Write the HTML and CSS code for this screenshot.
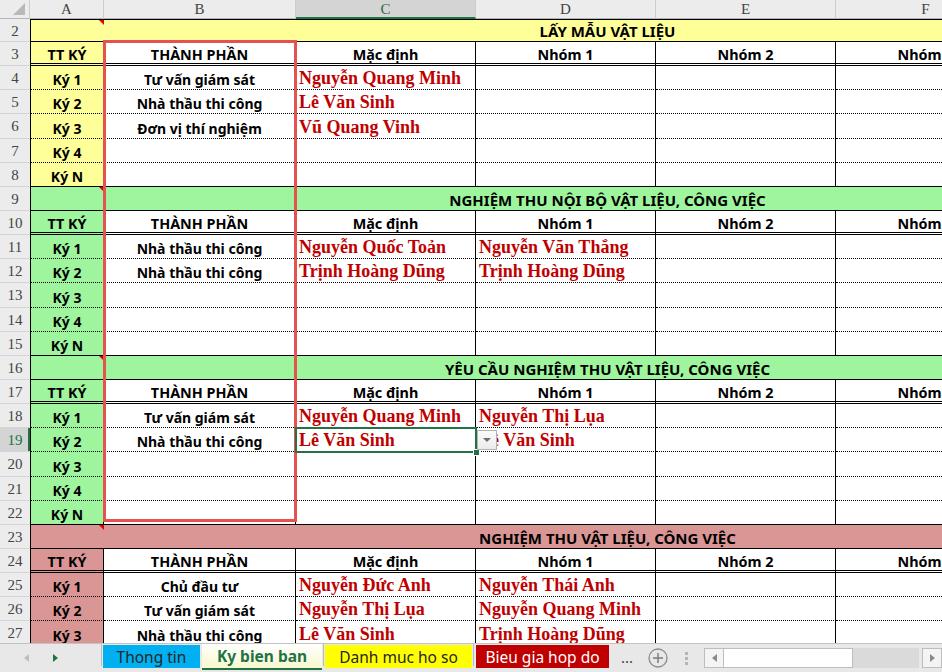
FILE: index.html
```html
<!DOCTYPE html>
<html lang="vi">
<head>
<meta charset="utf-8">
<title>Ky bien ban</title>
<link rel="stylesheet" href="styles.css">
</head>
<body>
<div class="app">
  <div class="sheet-wrap">
    <div class="sheet">
      <div class="ch corner"><span class="corner-tri"></span></div>
      <div class="ch">A</div>
      <div class="ch">B</div>
      <div class="ch sel">C</div>
      <div class="ch">D</div>
      <div class="ch">E</div>
      <div class="ch">F</div>

      <div class="row title first yel"><div class="rh">2</div><div class="t"><span class="cm"></span>LẤY MẪU VẬT LIỆU</div></div>
      <div class="row hd yel"><div class="rh">3</div><div class="a">TT KÝ</div><div>THÀNH PHẦN</div><div>Mặc định</div><div>Nhóm 1</div><div>Nhóm 2</div><div>Nhóm 3</div></div>
      <div class="row dr yel"><div class="rh">4</div><div class="a">Ký 1</div><div>Tư vấn giám sát</div><div class="nm">Nguyễn Quang Minh</div><div></div><div></div><div></div></div>
      <div class="row dr yel"><div class="rh">5</div><div class="a">Ký 2</div><div>Nhà thầu thi công</div><div class="nm">Lê Văn Sinh</div><div></div><div></div><div></div></div>
      <div class="row dr yel"><div class="rh">6</div><div class="a">Ký 3</div><div>Đơn vị thí nghiệm</div><div class="nm">Vũ Quang Vinh</div><div></div><div></div><div></div></div>
      <div class="row dr yel"><div class="rh">7</div><div class="a">Ký 4</div><div></div><div></div><div></div><div></div><div></div></div>
      <div class="row last yel"><div class="rh">8</div><div class="a">Ký N</div><div></div><div></div><div></div><div></div><div></div></div>

      <div class="row title grn"><div class="rh">9</div><div class="t"><span class="cm"></span>NGHIỆM THU NỘI BỘ VẬT LIỆU, CÔNG VIỆC</div></div>
      <div class="row hd grn"><div class="rh">10</div><div class="a">TT KÝ</div><div>THÀNH PHẦN</div><div>Mặc định</div><div>Nhóm 1</div><div>Nhóm 2</div><div>Nhóm 3</div></div>
      <div class="row dr grn"><div class="rh">11</div><div class="a">Ký 1</div><div>Nhà thầu thi công</div><div class="nm">Nguyễn Quốc Toản</div><div class="nm">Nguyễn Văn Thắng</div><div></div><div></div></div>
      <div class="row dr grn"><div class="rh">12</div><div class="a">Ký 2</div><div>Nhà thầu thi công</div><div class="nm">Trịnh Hoàng Dũng</div><div class="nm">Trịnh Hoàng Dũng</div><div></div><div></div></div>
      <div class="row dr grn"><div class="rh">13</div><div class="a">Ký 3</div><div></div><div></div><div></div><div></div><div></div></div>
      <div class="row dr grn"><div class="rh">14</div><div class="a">Ký 4</div><div></div><div></div><div></div><div></div><div></div></div>
      <div class="row last grn"><div class="rh">15</div><div class="a">Ký N</div><div></div><div></div><div></div><div></div><div></div></div>

      <div class="row title grn"><div class="rh">16</div><div class="t"><span class="cm"></span>YÊU CẦU NGHIỆM THU VẬT LIỆU, CÔNG VIỆC</div></div>
      <div class="row hd grn"><div class="rh">17</div><div class="a">TT KÝ</div><div>THÀNH PHẦN</div><div>Mặc định</div><div>Nhóm 1</div><div>Nhóm 2</div><div>Nhóm 3</div></div>
      <div class="row dr grn"><div class="rh">18</div><div class="a">Ký 1</div><div>Tư vấn giám sát</div><div class="nm">Nguyễn Quang Minh</div><div class="nm">Nguyễn Thị Lụa</div><div></div><div></div></div>
      <div class="row dr grn"><div class="rh on">19</div><div class="a">Ký 2</div><div>Nhà thầu thi công</div><div class="nm">Lê Văn Sinh</div><div class="nm">Lê Văn Sinh</div><div></div><div></div></div>
      <div class="row dr grn"><div class="rh">20</div><div class="a">Ký 3</div><div></div><div></div><div></div><div></div><div></div></div>
      <div class="row dr grn"><div class="rh">21</div><div class="a">Ký 4</div><div></div><div></div><div></div><div></div><div></div></div>
      <div class="row last grn"><div class="rh">22</div><div class="a">Ký N</div><div></div><div></div><div></div><div></div><div></div></div>

      <div class="row title pnk"><div class="rh">23</div><div class="t"><span class="cm"></span>NGHIỆM THU VẬT LIỆU, CÔNG VIỆC</div></div>
      <div class="row hd pnk"><div class="rh">24</div><div class="a">TT KÝ</div><div>THÀNH PHẦN</div><div>Mặc định</div><div>Nhóm 1</div><div>Nhóm 2</div><div>Nhóm 3</div></div>
      <div class="row dr pnk"><div class="rh">25</div><div class="a">Ký 1</div><div>Chủ đầu tư</div><div class="nm">Nguyễn Đức Anh</div><div class="nm">Nguyễn Thái Anh</div><div></div><div></div></div>
      <div class="row dr pnk"><div class="rh">26</div><div class="a">Ký 2</div><div>Tư vấn giám sát</div><div class="nm">Nguyễn Thị Lụa</div><div class="nm">Nguyễn Quang Minh</div><div></div><div></div></div>
      <div class="row dr pnk"><div class="rh">27</div><div class="a">Ký 3</div><div>Nhà thầu thi công</div><div class="nm">Lê Văn Sinh</div><div class="nm">Trịnh Hoàng Dũng</div><div></div><div></div></div>
    </div>

    <div class="redbox"></div>
    <div class="selbox"></div>
    <div class="fill"></div>
    <div class="dd"><span class="dd-tri"></span></div>
  </div>

  <div class="tabbar">
    <div class="nav"><span class="nav-l"></span><span class="nav-r"></span></div>
    <span class="sep"></span>
    <div class="tab blue">Thong tin</div>
    <div class="tab active">Ky bien ban</div>
    <span class="sep"></span>
    <div class="tab ylw">Danh muc ho so</div>
    <span class="sep"></span>
    <div class="tab red">Bieu gia hop do</div>
    <div class="more">...</div>
    <div class="add">
      <svg width="20" height="20" viewBox="0 0 20 20"><circle cx="10" cy="10" r="9" fill="none" stroke="#8c8c8c" stroke-width="1.3"/><path d="M10 5v10M5 10h10" stroke="#7a7a7a" stroke-width="1.4"/></svg>
    </div>
    <div class="split"><i></i><i></i><i></i></div>
    <div class="hscroll">
      <div class="sb-btn"><span class="sb-l"></span></div>
      <div class="thumb"></div>
      <div class="track"></div>
      <div class="sb-btn right"><span class="sb-r"></span></div>
    </div>
  </div>
</div>
</body>
</html>
```
FILE: styles.css
```css
html, body {
  margin: 0;
  padding: 0;
  background: #ffffff;
}

.app {
  width: 942px;
  height: 672px;
  overflow: hidden;
  display: flex;
  flex-direction: column;
}

.sheet-wrap {
  position: relative;
  height: 643px;
  overflow: hidden;
  flex: none;
}

.sheet {
  display: grid;
  grid-template-columns: 30px 74px 192px 180px 180px 180px 180px;
  grid-template-rows: 19px 23px repeat(25, 24.15px);
  width: 1016px;
}

/* column headers */
.ch {
  box-sizing: border-box;
  background: #ececec;
  border-right: 1px solid #cdcdcd;
  border-bottom: 1px solid #b4b4b4;
  font-family: "Liberation Serif", serif;
  font-size: 15px;
  line-height: 18px;
  color: #444444;
  text-align: center;
}
.ch.sel {
  background: #d4d4d4;
  color: #2f6b48;
  border-bottom: 2px solid #217346;
}
.ch.corner {
  position: relative;
}
.corner-tri {
  position: absolute;
  right: 4px;
  bottom: 3px;
  width: 0;
  height: 0;
  border-bottom: 12px solid #b9b9b9;
  border-left: 12px solid transparent;
}

/* rows */
.row { display: contents; }

.row > div {
  box-sizing: border-box;
  display: flex;
  align-items: flex-end;
  justify-content: center;
  padding: 0 3px 1px;
  border-right: 1px solid #000000;
  font-family: "Noto Sans", "Open Sans", sans-serif;
  font-weight: 700;
  font-size: 14px;
  line-height: 17px;
  color: #000000;
  white-space: nowrap;
  background: #ffffff;
}

.hd > div { border-bottom: 3px double #000000; padding-bottom: 0; font-size: 14.4px; }
.dr > div { border-bottom: 1px dotted #000000; }
.last > div { border-bottom: 1px solid #000000; }

.row > .a { border-left: 1px solid #000000; }
.yel > .a { background: #ffff99; }
.grn > .a { background: #9ef59e; }
.pnk > .a { background: #da9694; }

.row > .nm {
  justify-content: flex-start;
  padding-left: 3px;
  padding-bottom: 2px;
  font-family: "Liberation Serif", serif;
  font-size: 18px;
  line-height: 18px;
  color: #c00000;
}

/* merged title rows */
.row > .t {
  grid-column: 2 / -1;
  position: relative;
  border-left: 1px solid #000000;
  border-right: none;
  border-bottom: 1px solid #000000;
  padding-left: 168px;
  padding-right: 0;
  padding-bottom: 1px;
  font-size: 15px;
}
.first > .t { border-top: 1px solid #000000; }
.yel > .t { background: #ffff99; }
.grn > .t { background: #9ef59e; }
.pnk > .t { background: #da9694; }

.cm {
  position: absolute;
  left: 68px;
  top: 0;
  width: 0;
  height: 0;
  border-top: 5px solid #e00000;
  border-left: 5px solid transparent;
}

/* row headers */
.row > div.rh {
  background: #ececec;
  border-right: none;
  border-bottom: 1px solid #d4d4d4;
  align-items: center;
  padding: 1px 0 0;
  font-family: "Liberation Serif", serif;
  font-weight: 400;
  font-size: 15px;
  line-height: 18px;
  color: #444444;
}
.row > div.rh.on {
  background: #d4d4d4;
  color: #217346;
  box-shadow: inset -2px 0 0 #217346;
}

/* overlays */
.redbox {
  position: absolute;
  left: 103px;
  top: 40px;
  width: 194px;
  height: 482px;
  box-sizing: border-box;
  border: 3px solid #e6524f;
  pointer-events: none;
}
.selbox {
  position: absolute;
  left: 295px;
  top: 427px;
  width: 182px;
  height: 26px;
  box-sizing: border-box;
  border: 2px solid #217346;
}
.fill {
  position: absolute;
  left: 473px;
  top: 449px;
  width: 7px;
  height: 7px;
  box-sizing: border-box;
  background: #217346;
  border: 1px solid #ffffff;
}
.dd {
  position: absolute;
  left: 477px;
  top: 430px;
  width: 20px;
  height: 20px;
  box-sizing: border-box;
  background: linear-gradient(#fafafa, #ececec);
  border: 1px solid #b3b3b3;
  display: flex;
  align-items: center;
  justify-content: center;
}
.dd-tri {
  width: 0;
  height: 0;
  border-top: 4px solid #6e6e6e;
  border-left: 4px solid transparent;
  border-right: 4px solid transparent;
}

/* tab bar */
.tabbar {
  flex: none;
  height: 29px;
  box-sizing: border-box;
  border-top: 1px solid #c3c3c3;
  background: #e8e8e8;
  display: flex;
  align-items: flex-start;
  font-family: "Noto Sans", "Open Sans", sans-serif;
  font-size: 15.5px;
}
.nav {
  width: 100px;
  height: 28px;
  display: flex;
  align-items: center;
  padding-left: 24px;
  gap: 24px;
  box-sizing: border-box;
}
.nav-l {
  width: 0;
  height: 0;
  border-top: 4px solid transparent;
  border-bottom: 4px solid transparent;
  border-right: 5px solid #bdbdbd;
}
.nav-r {
  width: 0;
  height: 0;
  border-top: 4px solid transparent;
  border-bottom: 4px solid transparent;
  border-left: 5px solid #217346;
}
.sep {
  width: 1px;
  height: 22px;
  background: #bcbcbc;
  margin: 0 1px;
}
.tab {
  height: 23px;
  margin-top: 1px;
  display: flex;
  align-items: center;
  justify-content: center;
  box-sizing: border-box;
  color: #262626;
  line-height: 20px;
  white-space: nowrap;
}
.tab.blue { width: 97px; background: #00b0f0; }
.tab.active {
  width: 120px;
  height: 26px;
  margin-top: 0;
  margin-left: 2px;
  background: linear-gradient(#ffffff, #f8f8cf);
  border-bottom: 2px solid #217346;
  color: #217346;
  font-weight: 700;
}
.tab.ylw { width: 147px; background: #ffff00; }
.tab.red { width: 133px; background: #c00000; color: #ffffff; margin-left: 1px; }
.more {
  width: 36px;
  height: 26px;
  display: flex;
  align-items: center;
  justify-content: center;
  color: #444444;
  font-size: 15px;
}
.add {
  width: 26px;
  height: 28px;
  display: flex;
  align-items: center;
  justify-content: center;
}
.split {
  width: 30px;
  height: 28px;
  display: flex;
  flex-direction: column;
  align-items: center;
  justify-content: center;
  gap: 2px;
}
.split i {
  display: block;
  width: 3px;
  height: 3px;
  background: #b5b5b5;
}
.hscroll {
  margin-top: 4px;
  margin-left: 3px;
  height: 20px;
  flex: 1;
  display: flex;
}
.sb-btn {
  width: 20px;
  height: 20px;
  box-sizing: border-box;
  border: 1px solid #bdbdbd;
  background: #f4f4f4;
  display: flex;
  align-items: center;
  justify-content: center;
}
.sb-btn.right { margin-left: 3px; }
.sb-l {
  width: 0;
  height: 0;
  border-top: 4px solid transparent;
  border-bottom: 4px solid transparent;
  border-right: 5px solid #8a8a8a;
}
.sb-r {
  width: 0;
  height: 0;
  border-top: 4px solid transparent;
  border-bottom: 4px solid transparent;
  border-left: 5px solid #8a8a8a;
}
.thumb {
  width: 129px;
  height: 20px;
  box-sizing: border-box;
  background: #ffffff;
  border: 1px solid #bdbdbd;
  border-left: none;
}
.track {
  flex: 1;
  height: 20px;
  background: #dadada;
}
```
